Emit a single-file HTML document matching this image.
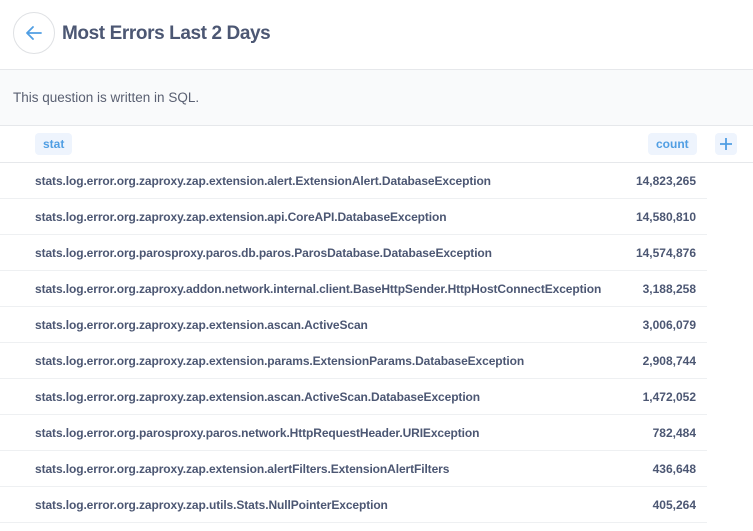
<!DOCTYPE html>
<html><head><style>
body{margin:0;width:753px;height:531px;overflow:hidden;background:#fff;font-family:"Liberation Sans",sans-serif;color:#4c5773;position:relative}
.hdr{position:absolute;left:0;top:0;width:753px;height:69px;border-bottom:1px solid #e6e8eb}
.back{position:absolute;left:13px;top:12px;width:40px;height:40px;border:1px solid #dfe1e4;border-radius:50%}
.title{position:absolute;left:62px;top:23px;font-size:19px;font-weight:bold;color:#4c5773;letter-spacing:-0.4px}
.sql{position:absolute;left:0;top:70px;width:753px;height:55px;background:#f9fafb;border-bottom:1px solid #e6e8eb}
.sql span{position:absolute;left:13px;top:20px;font-size:13.5px;color:#5a6072}
.ch{position:absolute;top:126px;left:0;width:753px;height:36px;border-bottom:1px solid #e6e8eb}
.pill{position:absolute;top:7px;height:22px;line-height:22px;background:#eef4fd;color:#509ee3;font-weight:bold;font-size:12px;border-radius:4px;padding:0 8px}
.row{position:absolute;left:0;width:707px;height:35px;border-bottom:1px solid #eef0f2;font-size:12px;font-weight:bold}
.row .a{position:absolute;left:35px;top:11px;letter-spacing:-0.1px}
.row .b{position:absolute;right:11px;top:11px}
</style></head><body>
<div class="hdr"><div class="back"><svg width="40" height="40" viewBox="0 0 40 40"><path d="M27 20H13M19 14l-6 6 6 6" fill="none" stroke="#509ee3" stroke-width="1.8" stroke-linecap="round" stroke-linejoin="round"/></svg></div>
<div class="title">Most Errors Last 2 Days</div></div>
<div class="sql"><span>This question is written in SQL.</span></div>
<div class="ch"><div class="pill" style="left:35px">stat</div><div class="pill" style="left:648px">count</div>
<div class="pill" style="left:715px;width:22px;padding:0"><svg width="22" height="22"><path d="M11 5v12M5 11h12" stroke="#509ee3" stroke-width="1.8"/></svg></div></div>
<div class="row" style="top:163px"><span class="a">stats.log.error.org.zaproxy.zap.extension.alert.ExtensionAlert.DatabaseException</span><span class="b">14,823,265</span></div>
<div class="row" style="top:199px"><span class="a">stats.log.error.org.zaproxy.zap.extension.api.CoreAPI.DatabaseException</span><span class="b">14,580,810</span></div>
<div class="row" style="top:235px"><span class="a">stats.log.error.org.parosproxy.paros.db.paros.ParosDatabase.DatabaseException</span><span class="b">14,574,876</span></div>
<div class="row" style="top:271px"><span class="a">stats.log.error.org.zaproxy.addon.network.internal.client.BaseHttpSender.HttpHostConnectException</span><span class="b">3,188,258</span></div>
<div class="row" style="top:307px"><span class="a">stats.log.error.org.zaproxy.zap.extension.ascan.ActiveScan</span><span class="b">3,006,079</span></div>
<div class="row" style="top:343px"><span class="a">stats.log.error.org.zaproxy.zap.extension.params.ExtensionParams.DatabaseException</span><span class="b">2,908,744</span></div>
<div class="row" style="top:379px"><span class="a">stats.log.error.org.zaproxy.zap.extension.ascan.ActiveScan.DatabaseException</span><span class="b">1,472,052</span></div>
<div class="row" style="top:415px"><span class="a">stats.log.error.org.parosproxy.paros.network.HttpRequestHeader.URIException</span><span class="b">782,484</span></div>
<div class="row" style="top:451px"><span class="a">stats.log.error.org.zaproxy.zap.extension.alertFilters.ExtensionAlertFilters</span><span class="b">436,648</span></div>
<div class="row" style="top:487px"><span class="a">stats.log.error.org.zaproxy.zap.utils.Stats.NullPointerException</span><span class="b">405,264</span></div>
</body></html>
